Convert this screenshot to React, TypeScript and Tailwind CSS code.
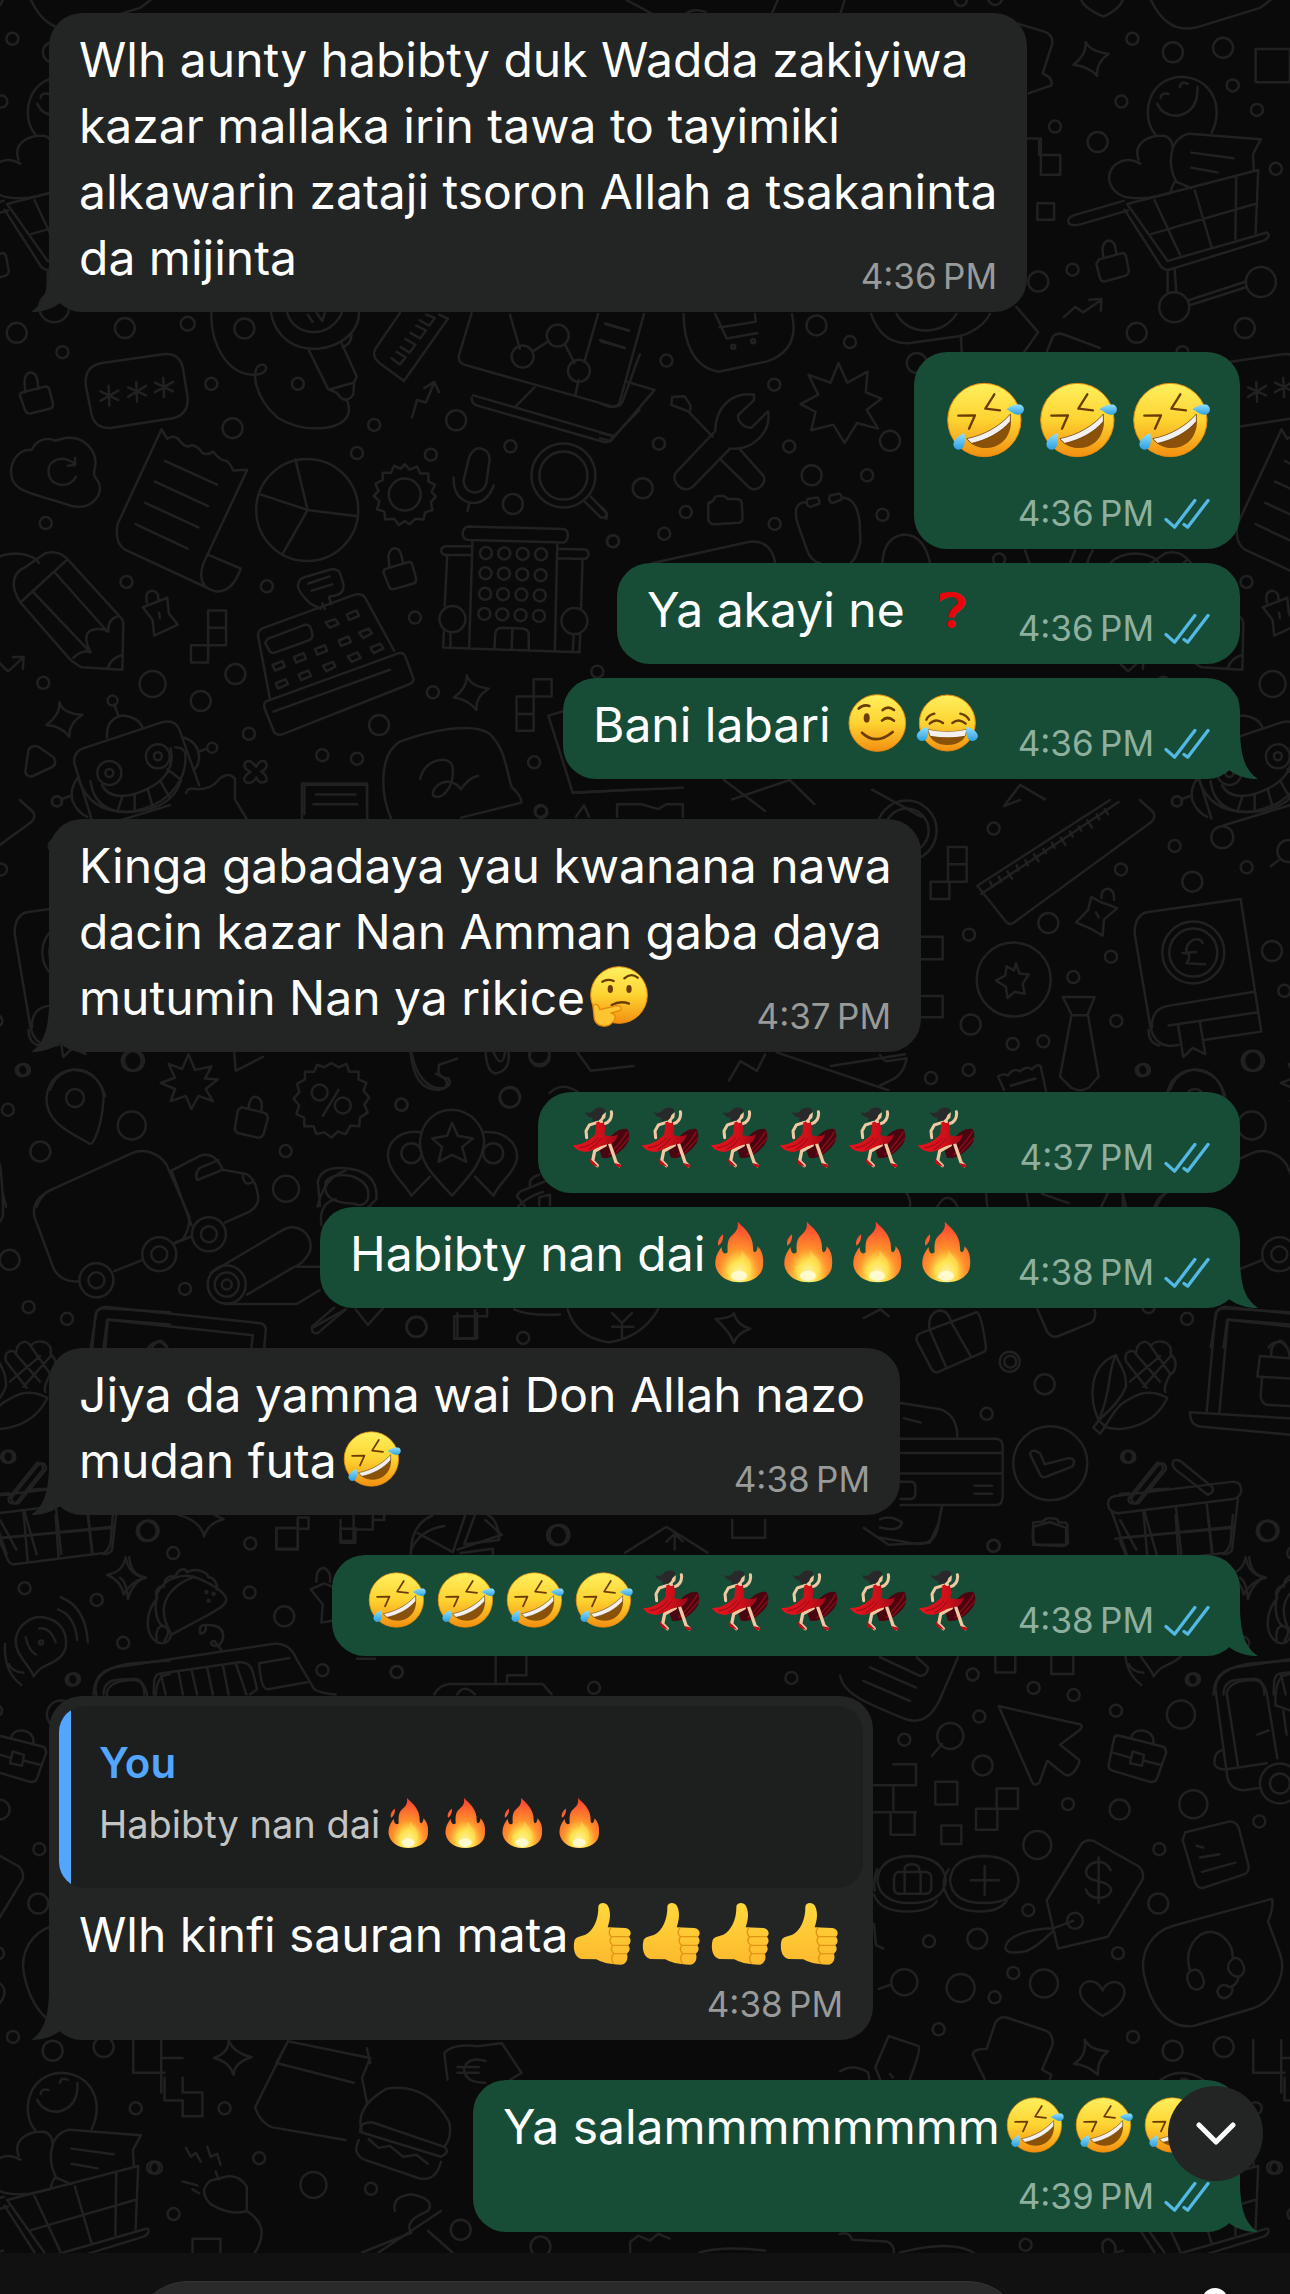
import type { ReactNode } from 'react';
import clsx from 'clsx';

/* ---------- wallpaper ---------- */

type Patch = {
  x: number;
  y: number;
  sx: number;
  sy: number;
  dots: number[][]; // [x, y, radius]
  paths: string[];
};

// each patch has its own drawing grid, placed on the 1290 x 2294 wallpaper
const patches: Patch[] = [
  {
    x: 0, y: 200, sx: 0.408, sy: 0.3954,
    dots: [
      [41, 336, 10], [306, 324, 10], [460, 313, 7], [599, 325, 10], [153, 385, 6], [518, 465, 6], [730, 465, 6],
      [570, 577, 10], [917, 569, 6], [1118, 557, 10], [875, 640, 6], [1056, 644, 6], [1251, 623, 6], [1257, 769, 10],
      [112, 817, 6], [1502, 863, 6], [310, 966, 6], [654, 977, 6], [1017, 1056, 6], [106, 1221, 6], [374, 1224, 13],
      [577, 1199, 10], [492, 1267, 10], [1061, 1245, 6], [929, 1328, 10], [610, 1350, 6], [790, 1404, 6], [875, 1413, 6],
      [1309, 1422, 6], [1464, 1193, 6], [276, 1266, 5], [520, 1385, 5], [140, 1521, 5], [1325, 1545, 6], [753, 784, 51],
      [1281, 396, 11], [1367, 343, 11], [1419, 432, 11], [268, 1449, 12], [387, 1407, 12], [268, 1449, 4], [387, 1407, 4],
      [992, 745, 16], [1381, 697, 32], [1381, 697, 24], [1109, 1060, 13], [1408, 1065, 13],
      [1191, 893, 6], [1236, 894, 6], [1281, 895, 6], [1326, 896, 6], [1190, 944, 6], [1235, 945, 6], [1280, 947, 6], [1325, 949, 6],
      [1189, 996, 6], [1233, 997, 6], [1278, 998, 6], [1323, 1000, 6], [1187, 1047, 6], [1231, 1048, 6], [1276, 1050, 6], [1321, 1052, 6],
    ],
    paths: [
      // padlocks
      'M62 486L60 458Q62 436 76 436 90 438 92 458L94 478M56 486L110 472Q118 470 121 480L130 515Q130 526 122 528L74 540Q64 540 61 530L49 495Q48 488 56 486Z',
      'M954 926L952 900Q956 881 968 881 980 882 984 900L988 918M948 932L1000 916Q1008 914 1011 924L1020 958Q1020 968 1014 970L966 984Q956 986 953 976L940 942Q940 934 948 932Z',
      // passcode box
      'M250 412L400 390Q440 386 448 424L460 500Q462 542 424 552L274 576Q232 580 224 540L210 468Q206 420 250 412Z',
      'M266 470L268 520M246 484L290 506M290 482L246 508M334 460L336 510M314 474L358 494M358 470L314 498M400 450L402 498M380 462L424 484M424 460L380 486',
      // cloud with reload arrow
      'M78 632C40 630 20 670 30 706C40 736 70 740 170 772C220 788 250 750 244 722C240 700 226 706 232 680C242 640 210 596 160 602C140 606 134 612 130 606C100 600 84 616 78 632Z',
      'M186 700C176 726 130 730 120 696C112 660 150 640 184 668M184 652L184 670 166 672',
      // receipt
      'M396 580L410 604Q428 592 440 608 456 630 470 620 486 622 496 640 510 646 522 636 540 660 556 660 566 670 572 684L606 682 498 920Q480 980 530 990 570 992 590 932L512 898M396 580L288 820Q280 866 306 884L506 980M404 660L532 720M380 712L510 774M356 766L486 828M332 820L460 882',
      // pie slices
      'M724 656L754 784 876 800M754 784L636 744M754 784L692 896',
      // lamp cable
      'M518 286C516 370 560 440 620 442C660 444 660 410 636 418C614 430 624 500 680 550C740 590 840 586 854 540C858 520 850 505 848 504',
      'M664 286C676 350 724 380 780 376C840 370 880 330 880 286M704 286C724 350 810 350 838 286M754 290L766 308M776 286L790 306 796 286',
      'M756 378L804 478 826 488Q846 520 866 492L868 462 874 446 836 360M812 478L866 462M862 340Q860 366 840 372',
      // keyboard corner, chart screen
      'M980 286L920 376Q910 396 930 412L990 458 1098 300 1076 290M960 400L980 416 994 398 972 384M982 372L1004 386 1018 366 994 352M1006 336L1030 350 1044 330 1020 318M1028 304L1052 318 1066 298 1044 290',
      'M1156 286L1124 396Q1124 410 1136 416L1500 522Q1520 524 1526 510L1568 390M1250 290L1274 376M1304 384L1346 356M1384 364L1408 412M1432 410L1466 288M1418 456L1410 494M1310 474L1264 522M1160 494L1500 596M1156 500Q1156 516 1170 520L1480 612Q1492 614 1498 604L1568 530M1484 314L1540 330M1474 358L1530 374',
      // zigzag arrow, gear, mic, magnifier
      'M1010 550L1022 506 1044 512 1064 462M1040 476L1064 460 1076 486',
      'M992 668L1004 682 1022 674 1030 692 1050 692 1050 712 1066 720 1058 738 1068 750 1056 764 1060 784 1042 790 1038 808 1018 806 1004 820 992 812 978 822 966 806 944 808 942 788 924 782 930 762 916 748 928 736 920 718 938 708 938 690 958 690 966 672 982 680Z',
      'M1150 650Q1160 628 1176 628 1200 632 1200 656L1192 716Q1184 740 1162 740 1138 736 1136 710ZM1112 702Q1110 750 1146 764 1190 776 1210 722M1150 768L1146 786',
      'M1434 764L1472 802Q1482 808 1488 794L1448 750',
      // building
      'M1148 826L1380 832Q1392 834 1392 848 1390 866 1380 866L1148 860Q1134 858 1134 842 1136 828 1148 826ZM1158 862L1150 1130M1366 866L1360 1136M1158 876L1090 876Q1080 878 1082 890 1084 898 1094 898L1156 898M1368 882L1434 884Q1444 886 1442 898 1440 908 1430 908L1368 906M1096 900L1090 1026M1428 908L1424 1034M1088 1092L1086 1132 1420 1144 1422 1098M1104 1096L1104 1132M1406 1098L1404 1142M1212 1132L1214 1096Q1216 1082 1230 1082L1280 1084Q1296 1086 1296 1100L1296 1138M1256 1084L1254 1134',
      // pencil
      'M50 1018C20 970 36 940 60 930L110 894C140 884 160 900 172 916L296 1056Q304 1064 302 1080L300 1188 200 1182Q180 1170 170 1160ZM50 1018L162 912M80 990L220 1142M136 944L262 1090M180 1158Q200 1136 222 1144 200 1100 224 1088 250 1080 266 1092 262 1060 292 1052M264 1184Q270 1160 300 1150',
      // pushpin, blocks
      'M360 1018Q354 988 374 988 390 992 388 1010M350 1030L410 1006 414 1046 436 1074 378 1102 374 1062ZM390 1044L392 1058',
      'M510 1038H554V1126H510ZM510 1082H554M468 1126H510V1170H468ZM1308 1212H1352V1256H1308ZM1266 1256H1308V1342H1266ZM1266 1300H1308',
      // till
      'M632 1100Q634 1086 646 1082L870 998Q886 994 894 1004L966 1140M632 1100L662 1264M786 1034L760 1020Q730 990 730 976 732 958 746 954L812 934Q830 932 834 946L842 972Q844 996 822 1000L806 1004 812 1022M790 1020L796 1034M756 970L808 952M764 988L814 972',
      'M652 1268L978 1146Q990 1144 994 1156L1014 1212Q1012 1222 1000 1226L690 1352Q678 1354 672 1346L648 1284Q646 1272 652 1268ZM670 1294L956 1188M656 1110L748 1074Q760 1074 762 1084L766 1100Q766 1110 756 1114L670 1146Q660 1144 658 1136L650 1120Z',
      'M798 1068L822 1060 830 1072 808 1082ZM850 1048L874 1038 880 1052 856 1062ZM880 1094L904 1084 912 1096 890 1108ZM830 1114L854 1104 860 1118 836 1128ZM772 1136L796 1126 802 1140 778 1150ZM720 1156L744 1146 750 1160 726 1170ZM668 1176L692 1166 698 1180 674 1190ZM908 1132L932 1122 940 1134 916 1146ZM852 1154L876 1144 884 1158 862 1168ZM792 1178L816 1168 822 1180 800 1192ZM732 1200L756 1190 762 1204 738 1214ZM676 1222L700 1212 706 1224 682 1236Z',
      // sparkles, arrow, play
      'M146 1270Q152 1298 202 1302 168 1324 170 1358 150 1330 114 1328 148 1302 146 1270ZM1144 1202Q1152 1230 1198 1236 1164 1256 1168 1290 1146 1262 1112 1258 1146 1234 1144 1202Z',
      'M0 1172L20 1192 56 1158M32 1156L58 1156 56 1186M70 1390Q80 1376 96 1384L132 1410Q140 1426 128 1434L78 1458Q64 1458 62 1446Z',
      // robot
      'M224 1564L182 1424Q180 1398 200 1388L400 1320Q430 1314 440 1340L488 1480M262 1360Q260 1310 302 1304 340 1308 350 1336M280 1276L290 1304M452 1360Q484 1370 488 1406 488 1430 476 1440M488 1394L508 1388M190 1462Q170 1490 178 1520 190 1550 214 1560M150 1516L174 1506M222 1470C230 1540 290 1560 350 1540C420 1520 460 1460 454 1400Q450 1384 430 1384M250 1480C270 1520 320 1510 360 1490C400 1470 430 1440 418 1386M300 1508L290 1540M330 1504L330 1544M362 1490L374 1534M392 1468L414 1508M410 1440L444 1466',
      // clover, star, note, signature bubble
      'M628 1434Q612 1410 600 1424 596 1440 614 1446 592 1460 602 1472 618 1480 628 1460 636 1480 652 1470 658 1456 640 1446 660 1436 650 1420 636 1414 628 1434Z',
      'M456 1500Q460 1484 482 1490 520 1490 536 1466 560 1444 576 1464L576 1516 606 1568M740 1568V1476H900V1568M768 1528H876M960 1568C930 1500 930 1400 980 1370C1060 1340 1160 1320 1200 1350C1240 1390 1240 1440 1254 1484Q1280 1510 1278 1524L1130 1562',
      'M1030 1464C1040 1410 1110 1400 1110 1440C1112 1490 1080 1520 1062 1506C1054 1484 1100 1450 1130 1490Q1150 1460 1172 1456M1398 1288L1344 1304 1404 1500 1568 1490',
    ],
  },
  {
    x: 600, y: 0, sx: 0.44, sy: 0.3954,
    dots: [
      [1210, 98, 6], [1302, 132, 10], [1416, 121, 10], [1438, 216, 6], [1185, 257, 6], [1493, 278, 6], [1034, 320, 6],
      [1131, 359, 10], [1536, 427, 6], [1074, 682, 6], [996, 712, 10], [568, 865, 6], [492, 823, 10], [151, 912, 6],
      [396, 973, 6], [720, 918, 10], [134, 1122, 6], [430, 1129, 6], [659, 1115, 10], [97, 1235, 10], [481, 1202, 10],
      [607, 1202, 6], [642, 1302, 6], [397, 1325, 6], [195, 1295, 6], [146, 1350, 6], [30, 1369, 6], [820, 0, 6],
      [898, -5, 7], [303, 877, 2], [348, 863, 2], [907, 1415, 6],
    ],
    paths: [
      'M1104 106Q1114 130 1156 136 1126 160 1130 192 1110 168 1076 164 1106 138 1104 106ZM1094 0Q1100 20 1144 42 1180 24 1188 0M1252 0Q1290 90 1360 68L1500 20 1524 0M60 0L124 38M194 36Q210 20 240 30M390 36L404 0M546 36L556 0',
      'M1490 124H1568V208H1490ZM950 60L1010 80Q1030 88 1028 110L1006 186Q1030 196 1026 216L974 236M970 350H998V392H1046V442H1002V350M994 514H1032V556H994Z',
      'M1144 652L1142 630Q1144 608 1158 608 1170 610 1172 630L1174 644M1134 656L1188 640Q1194 640 1196 650L1202 686Q1200 696 1192 698L1146 712Q1138 712 1136 702L1128 668ZM1054 802L1080 776 1098 790 1140 758M1112 758L1140 756 1138 786',
      'M190 794C190 860 210 930 270 940L380 914C440 890 446 840 436 794M262 794L288 856 358 842M272 828L354 814 352 794M616 794Q640 870 700 868L820 850Q870 830 886 794M674 794C700 850 780 850 810 794',
      'M0 860L56 880M12 818L66 836M100 794L44 1020Q36 1032 20 1028L0 1020M62 966L124 986 24 1116 0 1108M0 1094L28 1102',
      'M820 848L822 890M946 776L996 840 964 890M1016 888L1030 850Q1040 840 1054 846L1136 880',
      // starburst
      'M542 918L562 968 608 940 604 992 640 1008 606 1036 632 1084 584 1070 556 1120 530 1074 480 1088 490 1042 456 1022 496 998 474 948 524 968Z',
      // wrench and screwdriver
      'M350 998C300 990 262 1030 262 1090L172 1196C160 1220 190 1250 210 1232L296 1134C340 1140 390 1100 382 1040L344 1082C320 1080 312 1060 314 1050L350 1012ZM256 1104L200 1040 162 1024 164 1004 192 1002 206 1026 204 1044M272 1160L340 1234C360 1246 378 1222 372 1204L316 1134',
      'M246 1272L246 1314Q248 1326 260 1326L316 1322Q324 1320 324 1308L322 1270Q320 1262 308 1262L290 1262Q284 1252 274 1254L262 1256Q258 1270 246 1272Z',
      // stethoscope and friends
      'M468 1270C440 1270 444 1300 448 1320L470 1390Q480 1420 500 1424M550 1258C580 1260 586 1290 590 1320L592 1370Q584 1410 570 1424M472 1262L494 1258Q500 1264 498 1274L478 1282Q466 1278 472 1262ZM522 1254L544 1248Q552 1254 548 1264L528 1272Q518 1268 522 1254Z',
      'M120 1424L340 1370Q390 1366 398 1424M642 1424Q644 1360 690 1352 736 1352 750 1424M0 1280Q20 1294 14 1312M966 1392L976 1424M1080 1392L1068 1424M1120 1392Q1110 1410 1108 1424M1160 1424Q1180 1400 1220 1400 1260 1404 1270 1424',
    ],
  },
  {
    x: 880, y: 800, sx: 0.3333, sy: 0.5102,
    dots: [
      [341, 56, 6], [884, 90, 6], [1027, 73, 11], [723, 136, 6], [937, 160, 10], [1100, 132, 6], [505, 241, 10],
      [267, 264, 6], [693, 307, 6], [1176, 296, 10], [1213, 374, 6], [580, 347, 6], [272, 440, 10], [709, 433, 6],
      [490, 473, 6], [398, 478, 6], [1122, 511, 10], [266, 529, 6], [792, 529, 6], [153, 545, 6], [401, 352, 37],
      [940, 299, 31], [940, 299, 24], [921, 1017, 6], [389, 1101, 10], [494, 1145, 10], [320, 1203, 6], [511, 1300, 37],
      [748, 1287, 6], [1166, 1432, 10], [340, 1462, 6], [80, 60, 30], [80, 60, 22], [1225, 100, 11],
    ],
    paths: [
      // ruler
      'M292 168L690 0M292 168L380 240Q390 246 402 240L816 42Q828 34 820 24L780 0M304 184L716 4M330 160L338 170M356 150L364 160M382 140L396 154M410 128L416 138M436 118L444 128M462 106L476 120M490 96L498 104M516 84L524 94M542 74L556 88M570 62L578 72M596 52L604 60M622 40L636 54M650 28L658 38M674 18L684 28',
      'M204 92H260V160H204ZM204 126H260M152 160H208V194H152ZM126 268H188V312H126M126 384H188V426H126M372 12L420 0M1030 50L1230 10M1172 130L1196 118',
      // pin, star badge
      'M664 192Q664 174 684 174 704 176 702 196M634 190L662 200 712 212 672 234 668 266 632 252 588 240 624 216ZM648 220L656 230M408 320L418 340 446 342 428 360 434 380 404 376 382 388 378 366 348 354 376 344 380 326 402 334Z',
      // tie, ticket
      'M548 386L644 386 622 422 576 422ZM574 424L540 542 574 564 Q600 574 626 564L656 542 624 422M372 568L354 542Q370 534 384 540 400 524 420 532 440 520 456 528 470 516 482 522L498 570M392 560L466 546',
      // book
      'M1082 194L800 220Q764 226 764 262L810 440Q820 480 870 482L896 480M1082 194L1144 454 976 470M1122 376L860 404Q814 410 816 446M866 442L1134 416M894 440L910 504 938 486 976 498 960 436',
      'M968 280Q960 270 940 274 914 284 920 300 936 304 920 320L976 322M908 300L948 298',
      'M870 568Q890 530 950 528 1010 530 1036 580M0 500Q10 510 20 512L80 506Q70 540 30 550L0 560',
      'M80 770Q96 790 88 798M318 770L322 796M172 797Q190 778 204 780 224 782 232 797M440 772L446 797M486 772L566 790M684 770L664 797M728 770L738 797M858 770Q840 780 830 797',
      // suitcase
      'M126 1044L290 1004Q304 1006 318 1072 318 1080 310 1082L172 1122Q158 1122 152 1112L110 1060Q106 1048 126 1044ZM148 1036Q144 1010 170 1002 200 996 212 1020M150 1040L200 1114M214 1024L272 1090M472 998L500 1040Q512 1054 530 1052L636 1024Q650 1014 644 1000',
      // corn
      'M656 1216C630 1180 620 1110 708 1088C720 1110 740 1120 738 1150C720 1180 680 1200 656 1216ZM656 1216C700 1150 680 1120 708 1088M672 1228C720 1240 820 1230 862 1172C800 1150 760 1170 738 1178C700 1190 690 1220 672 1228ZM640 1230L656 1216 676 1228 660 1242Z',
      'M738 1100C730 1080 760 1074 768 1086C770 1060 800 1056 812 1070C830 1054 880 1060 872 1086C894 1098 890 1120 870 1126C860 1140 850 1150 856 1160M768 1086L840 1140M812 1070L872 1126M738 1100L800 1152M840 1090L750 1140M872 1090L790 1150',
      // gift laptop
      'M980 1200L1006 1010Q1012 996 1030 996L1230 1004M1018 1202L1044 1018 1230 1028M930 1200L1230 1212M930 1202Q932 1226 960 1228L1230 1244M1132 1130L1140 1090 1230 1094M1132 1130L1230 1134M1146 1134L1142 1170Q1146 1186 1170 1186L1230 1188M1174 1090Q1170 1066 1200 1060 1220 1062 1230 1090',
      // cards
      'M62 1182L180 1194Q234 1206 232 1252M72 1212L122 1220M62 1252H350Q368 1254 368 1266V1366Q366 1382 350 1382H62M62 1280H368M62 1320H368M284 1344H336M284 1360H336M62 1336H96Q106 1338 106 1346V1360Q104 1370 92 1370H62M186 1384L172 1430Q160 1460 110 1458L0 1446M0 1410Q30 1400 66 1416 60 1436 0 1426',
      'M450 1282Q452 1274 466 1276L480 1280 494 1302 566 1290Q582 1290 582 1298 582 1306 570 1308L500 1326Q486 1330 480 1322ZM460 1416L490 1414Q496 1406 512 1408 536 1408 536 1416L556 1416Q564 1418 562 1430L564 1456Q560 1462 548 1462L474 1460Q462 1460 458 1446Z',
      // basket
      'M706 1364L1060 1336Q1084 1336 1084 1354 1080 1368 1060 1370L714 1398Q684 1396 684 1378 686 1366 706 1364ZM754 1368L836 1302Q858 1296 858 1312L776 1378Q756 1382 754 1368ZM880 1296Q890 1290 906 1298L996 1346Q1006 1356 984 1362L886 1312Q874 1304 880 1296Z',
      'M696 1396L740 1478M1074 1370L1056 1470Q1050 1478 1030 1478M792 1392L830 1478M888 1386L904 1478M980 1378L998 1478M706 1448L1064 1424M1108 1484Q1112 1520 1158 1524 1120 1530 1104 1566 1100 1532 1080 1524',
    ],
  },
  {
    x: 0, y: 1030, sx: 0.3571, sy: 0.4337,
    dots: [
      [61, 93, 6], [369, 71, 10], [22, 184, 6], [369, 220, 14], [113, 280, 10], [210, 157, 9], [1124, 172, 6],
      [1427, 156, 10], [800, 279, 6], [801, 366, 13], [27, 530, 10], [80, 639, 6], [518, 597, 6], [270, 577, 17],
      [270, 577, 8], [446, 517, 17], [446, 517, 8], [585, 471, 17], [585, 471, 8], [635, 587, 19], [635, 587, 12],
      [635, 587, 5], [1167, 685, 10], [1465, 710, 6], [20, 984, 6], [411, 1155, 10], [485, 1206, 6], [701, 1184, 6],
      [69, 1287, 6], [271, 1314, 6], [699, 1297, 6], [796, 1352, 10], [345, 1413, 6], [201, 1498, 6], [903, 1476, 6],
      [1111, 1480, 6], [895, 144, 8], [960, 174, 8], [1152, 284, 10], [1381, 284, 10], [115, 1412, 2],
      [1510, 56, 10], [578, 1296, 1], [598, 1300, 1], [584, 1316, 1], [1560, 1165, 10],
    ],
    paths: [
      // map pin, starburst, padlock
      'M250 262C210 240 130 220 130 158C134 110 180 90 210 92C270 96 290 130 290 158Q286 220 262 256Q256 264 250 262Z',
      'M528 56L546 92 592 84 574 112 610 114 576 136 596 164 556 152 536 182 520 152 478 164 490 136 450 122 490 110 472 78 510 90ZM656 52L660 94 736 62M80 0Q80 30 110 36',
      'M696 182Q698 152 718 154 738 160 732 186M676 178L736 190Q750 192 750 204L738 240Q732 250 720 248L668 238Q656 234 658 224L666 186Z',
      // percent badge
      'M928 76L948 86 970 78 978 96 1004 96 1004 114 1026 122 1018 140 1034 156 1020 172 1030 190 1008 202 1006 222 982 220 968 240 946 234 928 248 908 236 886 240 878 222 852 222 852 202 830 194 838 174 822 158 838 144 832 124 854 114 854 96 880 96 888 80 908 86ZM948 138L904 198',
      // location pins
      'M1266 382C1220 340 1176 310 1176 258C1180 210 1220 184 1266 184C1320 186 1354 220 1356 258C1350 310 1310 340 1266 382ZM1266 214L1282 244 1324 250 1294 270 1306 304 1266 288 1228 304 1238 270 1210 250 1252 244Z',
      'M1180 236C1130 230 1086 250 1086 290C1090 330 1130 350 1152 382L1204 338M1354 236C1410 230 1450 260 1448 296C1440 330 1400 350 1382 382L1330 338',
      // van
      'M150 366L370 284C410 270 450 290 466 310L530 430Q532 460 510 484L490 490M150 366C110 380 90 400 96 430L150 550C170 580 200 580 222 580M320 556L400 530M480 324L560 290Q600 278 624 322L552 346Q544 330 560 318L612 300M624 322L690 332Q716 344 722 380 728 404 700 418L630 444M480 324L536 450M490 492L536 476M680 336Q684 360 704 352',
      // rolled poster, thermometer
      'M590 560L790 462C830 440 880 470 868 510Q850 540 820 548L692 610M630 632L830 632 895 600M830 546L895 546M890 350Q900 310 980 320 1060 330 1054 390L1030 410M912 350Q930 330 980 336 1040 350 1030 390 1020 410 990 400 900 400 912 350ZM890 350L896 406M900 450Q892 400 940 390',
      'M936 640L874 684Q870 700 888 700L968 644M996 644L1030 680 1072 642M1272 660V712H1330V646M1272 660H1364V644M1440 644Q1480 660 1568 656M1150 52Q1160 140 1230 138 1270 130 1256 112 1220 110 1230 80L1280 66M1360 52Q1364 100 1390 100 1430 92 1424 52',
      'M1470 406L1448 384Q1450 372 1470 368L1534 346M1484 360Q1480 340 1510 334M1510 404V386L1540 380V404',
      'M0 310Q10 380 8 430L0 442',
      // laptop, gift
      'M254 732L270 650Q278 640 294 638L730 676Q746 680 744 694L740 732M290 732L300 668 708 704 704 732M416 732Q430 716 452 720L468 732',
      'M0 1070L26 1068M24 1080L104 998Q122 998 120 1014L46 1090Q24 1096 24 1080ZM74 1060L136 1058',
      // blocks and diagram
      'M498 1118Q560 1130 572 1168 580 1138 626 1128L600 1118M774 1148H834V1196H774ZM834 1124H864V1150H834ZM954 1150H990V1178H954ZM990 1118V1152H1044V1118M1044 1130H1076V1118',
      'M1150 1210Q1150 1140 1210 1120M1170 1160L1268 1204M1302 1120L1268 1204M1330 1118L1300 1186 1398 1176Q1396 1130 1366 1118M1290 1206L1380 1196V1210',
      // basket bottom
      'M0 1178L22 1222Q28 1232 40 1232L290 1206Q306 1200 310 1180L316 1118M66 1112L78 1228M156 1118L164 1218M246 1118L258 1210M10 1170L312 1148',
      // sparkle, taco
      'M352 1216Q360 1256 404 1262 362 1276 346 1302 340 1270 300 1256 344 1250 352 1216Z',
      'M440 1300C460 1260 520 1250 560 1266C600 1280 634 1300 634 1314C630 1330 600 1340 580 1350L480 1394Q470 1420 440 1412C400 1390 410 1340 440 1310C430 1290 450 1280 458 1284C460 1260 480 1256 490 1262C500 1240 520 1240 524 1250C550 1238 580 1250 584 1262C600 1262 612 1280 606 1290M440 1412C430 1370 460 1370 468 1380Q476 1390 460 1408M440 1300C430 1340 440 1370 460 1376',
      'M480 1394Q450 1350 462 1320 480 1280 540 1262M560 1390Q556 1370 576 1372 580 1390 562 1392M576 1372C640 1370 630 1410 610 1420 590 1422 584 1410 600 1408L620 1430',
      // broadcast
      'M94 1490C80 1460 40 1440 44 1404C50 1370 90 1350 120 1354C170 1360 190 1390 184 1424C170 1460 130 1460 108 1476ZM72 1400Q80 1430 100 1440M110 1380Q140 1376 156 1412M162 1336Q210 1350 216 1406M170 1308Q240 1330 246 1412M14 1416Q10 1480 60 1510M24 1462Q34 1480 66 1482',
      'M870 1290L908 1276 932 1284M870 1290L904 1324 900 1366 930 1362M886 1272Q884 1242 908 1240 930 1250 924 1272',
      // bus
      'M262 1532Q264 1480 320 1470L760 1416Q810 1410 830 1450L880 1520Q900 1530 940 1532M290 1532Q290 1500 330 1498L380 1496Q404 1500 404 1532M430 1532L432 1500Q436 1484 450 1484L670 1458Q700 1456 708 1480L720 1520 700 1532M450 1484L464 1532M500 1480L512 1532M536 1474L552 1532M580 1470L596 1532M624 1464L640 1532M660 1460L690 1532M726 1460L810 1448M726 1460Q730 1520 750 1520L860 1504M1000 1450H1050M1216 1532Q1230 1510 1260 1508L1520 1508 1545 1532M1280 1532Q1300 1506 1330 1532M1388 1444V1506M1474 1444V1488H1420V1506',
    ],
  },
  {
    x: 840, y: 1600, sx: 0.3333, sy: 0.4209,
    dots: [
      [398, 177, 6], [581, 209, 6], [701, 226, 6], [1062, 188, 6], [828, 263, 6], [1023, 272, 14], [418, 277, 6],
      [193, 332, 6], [331, 323, 13], [428, 393, 10], [684, 485, 6], [839, 498, 10], [1060, 485, 14], [1258, 526, 6],
      [592, 582, 14], [958, 592, 6], [565, 737, 6], [955, 721, 10], [267, 811, 6], [412, 805, 10], [834, 839, 6],
      [193, 908, 13], [362, 922, 14], [520, 886, 6], [612, 911, 14], [464, 944, 6], [296, 1020, 6], [879, 1038, 6],
      [1308, 1349, 6], [557, 1532, 6], [1320, 436, 20], [1320, 436, 10], [705, 762, 8], [998, 1071, 10], [1151, 1062, 10],
    ],
    paths: [
      'M0 180C10 220 60 240 200 284C250 296 280 270 300 236L354 136M90 160L228 208M70 192L210 240M120 136L240 180Q262 180 264 160L230 136M466 134V172H526V134M634 134V176H700V134M276 370L306 342',
      // cursor, briefcase
      'M476 252L722 296Q730 300 720 308L660 344 718 380Q720 390 700 410 684 422 670 412L622 382 598 434Q584 444 576 432Z',
      'M836 322L968 348Q980 352 978 364L950 426Q944 434 930 432L820 406Q804 402 806 392L822 330Q826 320 836 322ZM874 326Q880 308 910 310 944 316 940 340M816 362L868 374M912 382L964 392M878 360L912 368 906 394 870 388Z',
      // bus
      'M1240 150Q1130 160 1126 210L1162 420Q1170 450 1210 452L1264 446M1240 190Q1170 190 1160 220L1194 394M1162 402L1280 388M1240 190Q1270 190 1280 220L1312 376M1252 320L1286 310M1150 356Q1120 360 1124 390 1130 404 1160 402M1240 150L1350 144M1306 250Q1306 190 1330 180L1350 176M1306 250L1350 262M1330 264L1340 320',
      'M160 390H228V440H160V504H228M160 440H102M102 504H152V558H224V504M286 432H352V486H286ZM304 536H364V580H304ZM470 448H534V496H470ZM408 496H472V546H408Z',
      'M210 608Q118 610 112 666 120 720 210 720 310 720 318 666 310 610 210 608ZM432 608Q336 610 330 666 336 720 432 720 530 720 536 666 530 610 432 608ZM102 700Q120 740 200 740 270 740 290 716M112 640Q100 660 104 690M326 640Q300 670 320 700 340 740 420 740 480 740 500 714',
      'M176 646H258Q274 648 274 660V684Q272 698 258 698H176Q162 696 162 684V660Q164 648 176 646ZM194 646V636Q198 628 216 628 236 628 238 640V646M194 646V698M242 646V698M392 666H476M434 632V700',
      // price tag
      'M620 714L726 578Q740 568 760 572L894 632Q914 644 908 664L804 800 654 828ZM700 762L640 780C560 782 500 800 496 826C500 840 520 840 560 834C600 820 620 800 640 786M812 642Q800 622 774 622 740 626 738 648 740 664 776 668 812 674 814 690 806 708 776 708 744 706 738 688M776 612V720',
      // note, headset bubble, heart
      'M1036 552L1170 526Q1188 526 1196 540L1226 632Q1228 646 1212 652L1090 684Q1074 686 1066 672L1028 570ZM1070 584L1090 588M1080 612L1138 604M1086 646L1186 624',
      'M1296 710L1000 774C930 790 900 840 912 890C930 960 980 1020 1060 1012L1240 970C1310 950 1340 880 1320 840L1284 764Q1302 730 1296 710ZM1050 880C1030 830 1070 790 1110 788C1150 790 1180 820 1178 850M1066 878Q1040 880 1042 900 1048 926 1070 926 1092 922 1092 908 1086 880 1066 878ZM1184 850Q1160 860 1166 880 1180 898 1200 894 1216 886 1212 872 1204 850 1184 850ZM1196 896Q1190 916 1170 920 1140 906 1132 930 1136 946 1156 946 1176 940 1178 924',
      'M788 988C750 970 720 950 720 930C724 900 770 896 788 928C800 900 850 900 854 932C850 960 810 980 788 988ZM116 924L152 914M102 770L108 820 130 828',
      'M106 1110L146 1036 236 1060Q244 1066 210 1138M106 1110L120 1138M150 1126L158 1134M434 1138L398 1080Q400 1066 440 1066L466 1004Q480 988 500 992L620 1024Q640 1034 638 1056L606 1116 634 1128 630 1138M734 1044Q750 1070 804 1072 770 1094 774 1128 740 1104 702 1102 742 1084 734 1044ZM0 1120Q40 1100 84 1122L88 1138',
      'M0 1506Q30 1500 36 1520L140 1524Q162 1530 162 1552M180 1550Q280 1530 340 1536 380 1540 404 1552M790 1550Q780 1520 806 1518 834 1530 824 1550L850 1546',
    ],
  },
  {
    x: 0, y: 1520, sx: 0.8227, sy: 0.4936,
    dots: [
      [165, 1192, 6], [273, 1192, 6], [186, 1312, 6], [315, 1293, 6], [381, 1347, 13], [451, 1355, 6], [211, 1406, 6],
      [560, 1438, 10], [657, 1472, 10], [680, 30, 10], [1208, 52, 6], [722, 340, 6], [482, 308, 6], [962, 320, 6],
    ],
    paths: [
      'M162 1054V1120H200M196 1054V1160M196 1090H222M200 1130V1176H222V1208H246V1160H222V1130M278 1054Q284 1080 306 1088 284 1100 284 1124 278 1096 260 1090 278 1080 278 1054Z',
      // sack, burger
      'M350 1056L310 1190Q316 1220 330 1230L420 1256M350 1056L450 1090 440 1130 446 1180M350 1056L336 1100 430 1140M446 1070L450 1100M440 1240Q430 1190 470 1152 520 1140 546 1220 550 1250 540 1270M438 1240L536 1290Q548 1280 540 1270L452 1220Q436 1220 438 1240ZM436 1256Q426 1290 450 1300L510 1334Q530 1340 536 1300M448 1254L460 1272 474 1268 490 1290 506 1286 520 1304',
      // plug
      'M226 1272L232 1290 238 1282 244 1300M252 1270L256 1290 264 1284 268 1306M222 1340L240 1348M234 1356L242 1364M256 1338Q240 1360 256 1386 280 1410 300 1400L300 1350Q290 1326 276 1330ZM300 1400Q330 1430 310 1484M262 1320L266 1336M480 1400Q476 1370 500 1366 530 1376 520 1400 490 1420 500 1444L440 1484M536 1400L460 1484M520 1440L550 1484',
      'M540 1080Q550 1060 580 1066L610 1060 634 1120 620 1134M540 1080L544 1134M590 1096Q570 1086 564 1110 564 1140 590 1140M556 1108H582M556 1120H582M766 1484V1462L776 1450 790 1460 800 1446 814 1456M234 1484V1456H268V1484M850 1484Q880 1470 930 1480',
      'M0 0L20 60M336 16H362V60H336ZM362 0V16M414 0V46H432V16M500 60Q510 20 540 12M556 60L610 30 590 0M760 66L810 14 860 66M820 60V30M810 44L820 28 830 44M890 0V36H930V0M1050 16L1080 50 1130 46 1140 10M1256 50V14L1276 4 1296 16V50Z',
    ],
  },
  {
    x: 0, y: 780, sx: 0.8227, sy: 0.4847,
    dots: [[69, 44, 5], [658, 66, 6], [488, 670, 6], [620, 654, 10], [656, 570, 10], [506, 1128, 10], [1228, 1200, 6]],
    paths: [
      'M370 70V10H446V70M384 30H432M96 0Q110 70 160 66 210 60 220 0M700 76L710 52 716 76M696 26L830 16M750 76V50H780L800 60 810 50H830V76M880 0L930 64M890 40L960 0 990 50M1120 76L1060 20M1222 50L1240 10 1270 40',
      'M500 562Q510 640 540 636 550 620 530 606M600 562Q610 600 614 562M702 562L718 600 770 590M886 620L900 580 920 600 930 566M944 562L1080 640M1010 590L1100 566M668 646Q684 620 704 646',
      'M630 880Q640 860 660 850M386 880Q394 820 420 806M556 1100V1152H580V1100M690 1092Q700 1150 740 1160 780 1150 800 1092M744 1100L756 1120 768 1100M756 1120V1150M744 1128H770M870 1112Q890 1110 892 1100 896 1126 912 1132 896 1140 892 1162 888 1140 870 1112M380 1130L420 1092M1050 1110L1070 1092 1080 1106',
    ],
  },
];

const cart: Patch = {
  x: 600, y: 0, sx: 0.44, sy: 0.3954,
  dots: [[1305, 777, 15], [1502, 713, 15]],
  paths: [
    'M1262 340C1230 300 1240 200 1320 194C1390 196 1420 270 1390 336M1266 262Q1280 296 1316 292 1360 280 1358 220M1274 248Q1276 232 1292 238M1318 220Q1320 204 1336 212',
    'M1224 404C1210 360 1250 340 1284 344C1300 350 1304 370 1300 386M1228 414C1190 390 1150 420 1158 460C1170 500 1200 504 1250 500L1296 488Q1300 470 1306 460M1310 460C1290 420 1290 350 1340 338L1502 352 1484 390 1486 432M1344 386L1440 400M1344 424L1404 436M1310 460L1344 476',
    'M1198 516L1496 430 1490 590M1198 516L1290 660M1260 506L1318 644M1352 482L1390 626M1446 446L1444 604M1252 592L1488 516M1192 530L1274 672Q1282 684 1294 682L1510 608Q1526 596 1516 588L1290 660M1190 508L1078 544Q1060 550 1066 566 1074 572 1090 568L1200 532M1290 684V740M1306 682L1310 740M1336 760L1468 712M1340 772L1470 726',
  ],
};

const PatchArt = ({ patch }: { patch: Patch }) => (
  <g>
    {patch.dots.map(([cx, cy, r], i) => (
      <circle key={i} cx={patch.x + cx * patch.sx} cy={patch.y + cy * patch.sy} r={r} />
    ))}
    <g transform={`translate(${patch.x} ${patch.y}) scale(${patch.sx} ${patch.sy})`}>
      {patch.paths.map((d, i) => (
        <path key={i} d={d} vectorEffect="non-scaling-stroke" />
      ))}
    </g>
  </g>
);

const Wallpaper = () => (
  <svg
    aria-hidden="true"
    viewBox="0 0 1290 2294"
    preserveAspectRatio="xMidYMin slice"
    className="absolute inset-0 h-full w-full fill-none stroke-[#212121] stroke-[2.5]"
    strokeLinecap="round"
    strokeLinejoin="round"
  >
    <g id="doodles">
      {patches.map((patch, i) => (
        <PatchArt key={i} patch={patch} />
      ))}
      <g id="cart">
        <PatchArt patch={cart} />
      </g>
      <use href="#cart" y="1996" />
    </g>
    <use href="#doodles" x="-1120" />
    <use href="#doodles" x="1120" />
  </svg>
);

/* ---------- emoji ---------- */

const Gradients = () => (
  <svg aria-hidden="true" className="absolute h-0 w-0">
    <defs>
      <linearGradient id="face" x1="0" y1="0" x2="0" y2="1">
        <stop offset="0" stopColor="#fff05e" />
        <stop offset="0.5" stopColor="#fdd331" />
        <stop offset="1" stopColor="#f38f10" />
      </linearGradient>
      <linearGradient id="tear" x1="0" y1="0" x2="0" y2="1">
        <stop offset="0" stopColor="#8fe0ff" />
        <stop offset="1" stopColor="#2d9fe0" />
      </linearGradient>
      <radialGradient id="flame" cx="0.5" cy="0.85" r="0.8">
        <stop offset="0" stopColor="#fffde0" />
        <stop offset="0.25" stopColor="#ffe24d" />
        <stop offset="0.5" stopColor="#ff922c" />
        <stop offset="1" stopColor="#fa4530" />
      </radialGradient>
      <linearGradient id="hand" x1="0" y1="0" x2="0" y2="1">
        <stop offset="0" stopColor="#ffd83d" />
        <stop offset="1" stopColor="#fdb92c" />
      </linearGradient>
      <linearGradient id="dress" x1="0" y1="0" x2="1" y2="0">
        <stop offset="0" stopColor="#e8141c" />
        <stop offset="0.6" stopColor="#d0101a" />
        <stop offset="1" stopColor="#9c0a16" />
      </linearGradient>
    </defs>
  </svg>
);

type EmojiName = 'rofl' | 'wink' | 'joy' | 'think' | 'dancer' | 'fire' | 'thumb';

const emojiArt: Record<EmojiName, { label: string; box: string; art: ReactNode }> = {
  rofl: {
    label: '🤣',
    box: '111 127 279 234',
    art: (
      <>
        <circle cx="250" cy="244" r="110" fill="url(#face)" stroke="#e8890c" strokeWidth="3" />
        <path d="M172 231L222 230 204 270M280 167L253 210 297 215" fill="none" stroke="#6b3d05" strokeWidth="7" strokeLinejoin="round" strokeLinecap="round" />
        <path d="M197 300C250 290 300 260 328 226C336 270 320 310 280 324C250 334 215 326 197 300Z" fill="#8a5208" />
        <path d="M197 300C250 290 300 260 328 226L328 248C300 282 256 304 212 314Z" fill="#f3f0f0" stroke="#6b3d05" strokeWidth="2" />
        <path d="M316 212C330 200 346 196 360 198C374 206 370 224 356 228C340 230 330 218 316 212Z" fill="url(#tear)" />
        <path d="M190 284C174 290 158 302 157 318C160 334 178 338 187 326C194 312 192 298 190 284Z" fill="url(#tear)" />
      </>
    ),
  },
  wink: {
    label: '😉',
    box: '0 0 207 174',
    art: (
      <>
        <circle cx="100" cy="87" r="85" fill="url(#face)" stroke="#e8890c" strokeWidth="3" />
        <ellipse cx="68" cy="72" rx="9" ry="14" fill="#6b3d05" />
        <path d="M44 44Q58 30 76 36M116 48Q132 34 150 48M114 80Q130 64 150 80M54 116Q96 156 146 114" fill="none" stroke="#6b3d05" strokeWidth="8" strokeLinecap="round" />
      </>
    ),
  },
  joy: {
    label: '😂',
    box: '30 1065 207 174',
    art: (
      <>
        <circle cx="133" cy="1152" r="84" fill="url(#face)" stroke="#e8890c" strokeWidth="3" />
        <path d="M70 1142Q76 1128 94 1124M172 1124Q190 1128 198 1142M80 1154Q98 1136 120 1152M148 1152Q168 1136 188 1154" fill="none" stroke="#6b3d05" strokeWidth="7" strokeLinecap="round" />
        <path d="M74 1170Q133 1184 192 1170C192 1200 168 1218 133 1218C100 1218 76 1200 74 1170Z" fill="#8a5208" />
        <path d="M76 1172Q133 1184 190 1172L186 1190Q133 1200 82 1190Z" fill="#f3f0f0" />
        <path d="M76 1164C60 1166 42 1178 41 1192C44 1208 62 1210 70 1200C78 1186 76 1174 76 1164ZM190 1164C206 1166 224 1178 225 1192C222 1208 204 1210 196 1200C188 1186 190 1174 190 1164Z" fill="url(#tear)" />
      </>
    ),
  },
  think: {
    label: '🤔',
    box: '0 0 207 174',
    art: (
      <>
        <circle cx="102" cy="84" r="85" fill="url(#face)" stroke="#e8890c" strokeWidth="3" />
        <ellipse cx="76" cy="66" rx="8" ry="12" fill="#6b3d05" />
        <ellipse cx="132" cy="66" rx="8" ry="12" fill="#6b3d05" />
        <path d="M52 44Q68 34 86 42M118 34Q138 16 158 32M80 114Q106 100 132 110" fill="none" stroke="#6b3d05" strokeWidth="7" strokeLinecap="round" />
        <path d="M24 118C30 106 42 112 44 128L96 116C112 116 112 130 100 132L78 138C96 142 92 158 82 166C66 186 34 178 28 156Z" fill="#ffc530" stroke="#e8890c" strokeWidth="4" strokeLinejoin="round" />
      </>
    ),
  },
  dancer: {
    label: '💃',
    box: '84 87 207 174',
    art: (
      <>
        <path d="M212 172C228 154 250 146 262 150C272 166 270 190 252 206C234 226 206 242 186 236L176 206Z" fill="#4a0610" />
        <path d="M206 228C226 206 248 186 262 158M226 222C244 204 258 184 268 176" fill="none" stroke="#8e0c1a" strokeWidth="4" />
        <path d="M172 130L148 138 138 156 140 176" fill="none" stroke="#f0c8a2" strokeWidth="9" strokeLinecap="round" strokeLinejoin="round" />
        <path d="M194 134Q214 128 215 104L214 98" fill="none" stroke="#f0c8a2" strokeWidth="9" strokeLinecap="round" />
        <path d="M184 110L198 100 196 116 188 124 190 134H176V116Z" fill="#f0c8a2" />
        <path d="M134 99Q150 106 160 95C168 82 192 82 197 95L188 104C186 116 180 126 168 124Q154 132 158 116Q142 116 134 99Z" fill="#29282b" />
        <path d="M196 198L164 216 158 246 172 260M208 192L220 226 228 250 238 260" fill="none" stroke="#f0c8a2" strokeWidth="10" strokeLinecap="round" strokeLinejoin="round" />
        <path d="M169 130L177 128Q184 136 191 128L196 148 193 168C206 172 222 174 234 166C230 182 222 194 204 196C184 198 166 212 144 218C124 220 106 212 99 198C122 200 148 186 166 166Z" fill="url(#dress)" />
        <path d="M118 206Q150 204 174 176M146 212Q170 200 184 178" fill="none" stroke="#8e0c1a" strokeWidth="3" />
        <path d="M148 238L154 256 176 264 162 250ZM222 252L232 264 246 264 240 256Z" fill="#c40d18" />
      </>
    ),
  },
  fire: {
    label: '🔥',
    box: '496 434 207 174',
    art: (
      <>
        <path d="M594 430C612 448 642 470 640 512C640 524 652 528 654 504C670 520 672 540 670 562C668 592 638 612 600 612C560 612 532 590 527 560C526 536 534 522 546 506C546 524 556 530 564 522C562 490 566 480 582 466C594 456 596 444 594 430ZM550 468C552 480 548 494 536 502C532 488 540 476 550 468Z" fill="url(#flame)" />
        <path d="M606 514C612 530 630 538 634 556C640 586 620 604 600 606C574 606 558 588 564 566C568 556 576 562 586 554C598 546 606 534 606 514Z" fill="#ffe65c" opacity="0.45" />
        <ellipse cx="598" cy="592" rx="24" ry="15" fill="#fffbd6" opacity="0.9" />
      </>
    ),
  },
  thumb: {
    label: '👍',
    box: '0 0 207 174',
    art: (
      <>
        <path d="M91 8C92-6 114-6 120 6C130 26 126 50 119 70L172 72C190 74 192 94 182 98C190 104 190 118 180 124C188 130 186 144 176 149C182 158 178 180 160 182C120 182 100 174 85 166L40 165C18 160 14 130 20 108C24 98 40 97 52 92C76 80 92 45 91 8Z" fill="url(#hand)" />
        <path d="M182 98H130Q118 86 128 73M180 124H134Q120 112 130 99M176 149H138Q124 138 134 125M136 150Q126 162 136 178" fill="none" stroke="#e29416" strokeWidth="4" strokeLinecap="round" />
      </>
    ),
  },
};

const emojiSizes = {
  text: 'h-[58px] w-[69px] align-[-10px]',
  big: 'h-[78px] w-[93px]',
  quote: 'h-[48px] w-[57px] align-[-9px]',
};

const Emoji = ({ name, count = 1, size = 'text' }: { name: EmojiName; count?: number; size?: keyof typeof emojiSizes }) => (
  <>
    {Array.from({ length: count }, (_, i) => (
      <svg
        key={i}
        role="img"
        aria-label={emojiArt[name].label}
        viewBox={emojiArt[name].box}
        className={clsx('inline-block overflow-visible', emojiSizes[size])}
      >
        {emojiArt[name].art}
      </svg>
    ))}
  </>
);

/* ---------- bubbles ---------- */

const Tail = ({ sent }: { sent?: boolean }) => (
  <svg
    aria-hidden="true"
    viewBox="954 1150 120 166"
    className={clsx('absolute bottom-0 h-[55px] w-[40px]', sent ? '-right-[18px] fill-[#174d37]' : '-left-[18px] -scale-x-100 fill-[#222524]')}
  >
    <path d="M1019 1150C1021 1240 1030 1285 1074 1316C1040 1316 1010 1306 990 1291L960 1270L1000 1150Z" />
  </svg>
);

const Stamp = ({ time, sent }: { time: string; sent?: boolean }) => (
  <div className="flex shrink-0 items-center justify-end gap-[10px]">
    <time className={clsx('text-[35px] leading-[40px] whitespace-nowrap', sent ? 'text-[#8fb09f]' : 'text-[#999b9a]')}>
      {time}&#8239;PM
    </time>
    {sent && (
      <svg role="img" aria-label="Read" viewBox="793 472 140 93" className="h-[31px] w-[46px] fill-none stroke-[#53b8e4] stroke-[10]" strokeLinecap="round" strokeLinejoin="round">
        <path d="M799 537L825 560 887 479M854 552L865 560 927 479" />
      </svg>
    )}
  </div>
);

type BubbleProps = {
  time: string;
  sent?: boolean;
  tail?: boolean;
  timeBelow?: boolean;
  lines?: string[]; // full lines above the one that shares its row with the time
  quote?: ReactNode;
  className?: string;
  children: ReactNode;
};

const Bubble = ({ time, sent, tail, timeBelow, lines = [], quote, className, children }: BubbleProps) => (
  <li
    className={clsx(
      'relative max-w-full rounded-[33px] pb-4',
      sent ? 'self-end bg-[#174d37]' : 'self-start bg-[#222524]',
      className,
    )}
  >
    {tail && <Tail sent={sent} />}
    {quote}
    <div className="relative px-[30px] pt-[14px] text-[48px] leading-[66px] whitespace-pre text-white">
      {lines.map((line) => (
        <p key={line}>{line}</p>
      ))}
      <div className={clsx('flex', timeBelow ? 'flex-col gap-4' : 'items-end justify-between')}>
        <div className={clsx(!timeBelow && 'mb-[5px]')}>{children}</div>
        <Stamp time={time} sent={sent} />
      </div>
    </div>
  </li>
);

const Group = ({ children }: { children: ReactNode }) => (
  <ul className="flex flex-col gap-[14px]">{children}</ul>
);

const App = () => (
  <div className="relative flex h-screen flex-col overflow-hidden bg-[#0a0a0a] font-['Inter','Liberation_Sans',sans-serif]">
    <Gradients />
    <Wallpaper />

    <main className="relative flex shrink-0 flex-col gap-[40px] pt-[13px] pr-[50px] pb-[21px] pl-[49px]">
      <Group>
        <Bubble
          time="4:36"
          tail
          className="w-[978px]"
          lines={[
            'Wlh aunty habibty duk Wadda zakiyiwa',
            'kazar mallaka irin tawa to tayimiki',
            'alkawarin zataji tsoron Allah a tsakaninta',
          ]}
        >
          da mijinta
        </Bubble>
      </Group>

      <Group>
        <Bubble time="4:36" sent timeBelow className="w-[326px]">
          <div className="mb-[3px] flex h-[108px] items-center justify-center">
            <Emoji name="rofl" count={3} size="big" />
          </div>
        </Bubble>
        <Bubble time="4:36" sent className="w-[623px]">
          Ya akayi ne <span className="inline-block w-[69px] text-center font-['DejaVu_Sans'] text-[#e8060c]">{'❓\uFE0E'}</span>
        </Bubble>
        <Bubble time="4:36" sent tail className="w-[677px]">
          Bani labari <Emoji name="wink" />
          <Emoji name="joy" />
        </Bubble>
      </Group>

      <Group>
        <Bubble
          time="4:37"
          tail
          className="w-[872px]"
          lines={['Kinga gabadaya yau kwanana nawa', 'dacin kazar Nan Amman gaba daya']}
        >
          mutumin Nan ya rikice
          <Emoji name="think" />
        </Bubble>
      </Group>

      <Group>
        <Bubble time="4:37" sent className="w-[702px]">
          <Emoji name="dancer" count={6} />
        </Bubble>
        <Bubble time="4:38" sent tail className="w-[920px]">
          Habibty nan dai
          <Emoji name="fire" count={4} />
        </Bubble>
      </Group>

      <Group>
        <Bubble time="4:38" tail className="w-[851px]" lines={['Jiya da yamma wai Don Allah nazo']}>
          mudan futa
          <Emoji name="rofl" />
        </Bubble>
      </Group>

      <Group>
        <Bubble time="4:38" sent tail className="w-[908px]">
          <Emoji name="rofl" count={4} />
          <Emoji name="dancer" count={5} />
        </Bubble>
      </Group>

      <Group>
        <Bubble
          time="4:38"
          tail
          timeBelow
          className="w-[824px]"
          quote={
            <blockquote className="relative px-[10px] pt-[10px]">
              <div className="flex h-[182px] overflow-hidden rounded-[26px] bg-[#1d1e1e]">
                <div className="w-[12px] bg-[#53a6fd]" />
                <div className="flex flex-col justify-center pl-[28px] whitespace-pre">
                  <cite className="text-[42px] leading-[54px] font-semibold text-[#53a6fd] not-italic">You</cite>
                  <p className="text-[38px] leading-[68px] text-[#c3c4c4]">
                    Habibty nan dai
                    <Emoji name="fire" count={4} size="quote" />
                  </p>
                </div>
              </div>
            </blockquote>
          }
        >
          Wlh kinfi sauran mata
          <Emoji name="thumb" count={4} />
        </Bubble>
      </Group>

      <Group>
        <Bubble time="4:39" sent tail timeBelow className="w-[767px]">
          Ya salammmmmmmm
          <Emoji name="rofl" count={3} />
        </Bubble>
      </Group>

      <button
        type="button"
        aria-label="Scroll to latest"
        className="absolute right-[27px] bottom-[72px] flex size-[95px] items-center justify-center rounded-full bg-[#222524]"
      >
        <svg aria-hidden="true" viewBox="0 0 40 24" className="h-[24px] w-[40px] fill-none stroke-white stroke-[5]" strokeLinecap="round" strokeLinejoin="round">
          <path d="M3 3L20 20 37 3" />
        </svg>
      </button>
    </main>

    <footer className="relative flex shrink-0 items-start gap-[132px] bg-[#111111] pt-[28px] pr-[15px] pl-[133px]">
      <input
        type="text"
        aria-label="Message"
        className="h-[110px] min-w-0 flex-1 rounded-[55px] border border-[#333333] bg-[#2a2a2a] px-[40px] text-[48px] text-white"
      />
      <button type="button" aria-label="Record voice message" className="mt-[7px] w-[120px]">
        <svg aria-hidden="true" viewBox="0 0 60 80" className="mx-auto h-[80px] w-[60px] fill-none stroke-white stroke-[5]">
          <rect x="17" y="0" width="26" height="50" rx="13" className="fill-white stroke-none" />
          <path d="M5 34v6a25 25 0 0 0 50 0v-6M30 65v15" />
        </svg>
      </button>
    </footer>
  </div>
);

export default App;
